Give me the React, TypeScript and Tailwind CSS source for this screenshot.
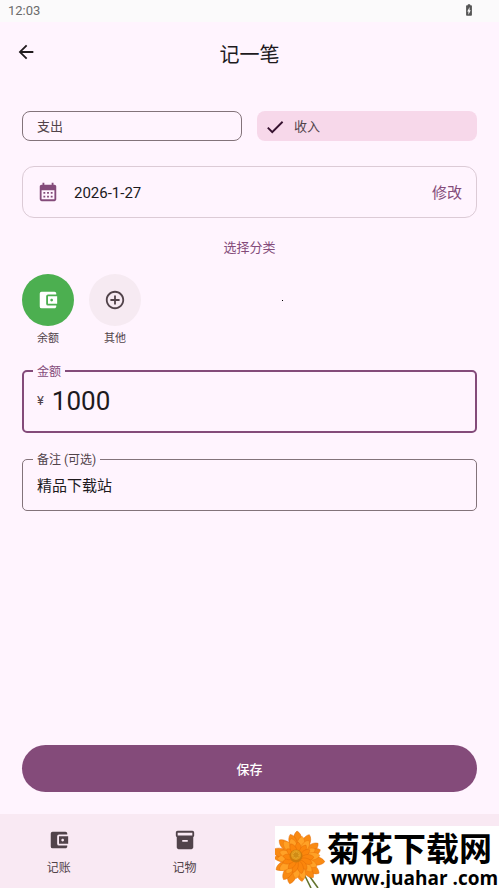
import { useState } from "react";
import type { ReactNode } from "react";
import {
  MdAccountBalanceWallet,
  MdAddCircleOutline,
  MdArrowBack,
  MdBatteryChargingFull,
  MdCalendarMonth,
  MdCheck,
  MdInventory2,
} from "react-icons/md";

function StatusBar() {
  return (
    <div className="flex h-[22px] items-center justify-between bg-[#fbfafb] pr-[23px] pl-2 text-[13px] text-[#6b6b6b]">
      <span>12:03</span>
      <MdBatteryChargingFull className="mb-0.5 size-3.5 text-[#555555]" />
    </div>
  );
}

function TypeChip({ label, selected, onSelect }: { label: string; selected: boolean; onSelect: () => void }) {
  return (
    <button
      type="button"
      aria-pressed={selected}
      onClick={onSelect}
      className={
        selected
          ? "flex h-[30px] items-center gap-2 rounded-lg bg-[#f7d8ea] pt-px pl-[7px] text-[13px] text-[#51434a]"
          : "flex h-[30px] items-center rounded-lg border border-[#83737a] pt-px pl-3.5 text-[13px] text-[#51434a]"
      }
    >
      {selected && <MdCheck className="size-[22px] text-[#36112f]" />}
      {label}
    </button>
  );
}

function Category({ label, tone, children }: { label: string; tone: string; children: ReactNode }) {
  return (
    <button type="button" className="flex w-[52px] flex-col items-center gap-1 text-[11px] leading-[18px] text-[#51434a]">
      <span className={`flex size-[52px] items-center justify-center rounded-full ${tone}`}>{children}</span>
      {label}
    </button>
  );
}

function NavItem({ label, children }: { label: string; children: ReactNode }) {
  return (
    <a href="#" className="flex flex-col items-center gap-2 pt-[15px] text-xs leading-[18px] text-[#51434a]">
      {children}
      {label}
    </a>
  );
}

const outerPetals = Array.from({ length: 15 }, (_, i) => ({ angle: i * 24 + (i % 3) * 4, reach: 1 - (i % 4) * 0.04 }));
const middlePetals = Array.from({ length: 14 }, (_, i) => ({ angle: i * 25.7 + 11 - (i % 2) * 5, reach: 1 - (i % 3) * 0.06 }));
const innerPetals = Array.from({ length: 13 }, (_, i) => ({ angle: i * 27.7 + (i % 2) * 4, reach: 1 - (i % 3) * 0.05 }));

function Flower() {
  return (
    <svg viewBox="0 0 52 62" className="h-[62px] w-[52px] shrink-0" aria-hidden="true">
      <path d="M29 48 36 62M33 48 43 62" stroke="#65752f" strokeWidth="1.6" fill="none" />
      <g transform="translate(23 32)">
        {outerPetals.map(({ angle, reach }) => (
          <path key={angle} d="M0-5C-6-13-6-23-1-27 5-24 6-13 0-5Z" fill="#f98a12" stroke="#e06a08" strokeWidth=".5" transform={`rotate(${angle}) scale(${reach})`} />
        ))}
        {middlePetals.map(({ angle, reach }) => (
          <path key={angle} d="M0-4C-5-11-5-19 0-22 5-19 5-11 0-4Z" fill="#ffa126" stroke="#ec780c" strokeWidth=".5" transform={`rotate(${angle}) scale(${reach})`} />
        ))}
        {innerPetals.map(({ angle, reach }) => (
          <path key={angle} d="M0-2C-4-7-4-13 0-16 4-13 4-7 0-2Z" fill="#fb860c" stroke="#dd6606" strokeWidth=".4" transform={`rotate(${angle}) scale(${reach})`} />
        ))}
        <circle cx="-2" cy="-2" r="6.5" fill="#cf7a0a" />
        <circle cx="-2" cy="-3" r="5" fill="#e39a1c" />
        <circle cx="-2" cy="-3" r="3" fill="#d08c16" strokeDasharray="1 1" stroke="#efb53a" />
      </g>
    </svg>
  );
}

export default function App() {
  const [kind, setKind] = useState("income");
  return (
    <div className="relative flex min-h-screen flex-col bg-[#fff4fe] font-[Roboto,'Noto_Sans_CJK_SC',sans-serif] text-[#201a1d]">
      <StatusBar />
      <header className="grid h-16 grid-cols-[1fr_auto_1fr] items-center px-[15px]">
        <button type="button" aria-label="返回" className="mb-1 w-fit">
          <MdArrowBack className="size-[22px]" />
        </button>
        <h1 className="pt-0.5 text-xl">记一笔</h1>
      </header>

      <main className="flex flex-1 flex-col px-[22px] pt-[25px]">
        <div className="grid grid-cols-2 gap-[15px]">
          <TypeChip label="支出" selected={kind === "expense"} onSelect={() => setKind("expense")} />
          <TypeChip label="收入" selected={kind === "income"} onSelect={() => setKind("income")} />
        </div>

        <div className="mt-[25px] flex h-[52px] items-center rounded-xl border border-[#dccbd6] px-3.5 text-[15px]">
          <MdCalendarMonth className="size-[22px] text-[#844b7a]" />
          <span className="ml-[15px] flex-1 pt-0.5">2026-1-27</span>
          <button type="button" className="pt-0.5 text-[#844b7a]">修改</button>
        </div>

        <h2 className="mt-5 text-center text-[13px] leading-5 text-[#844b7a]">选择分类</h2>

        <div className="mt-4 flex gap-[15px]">
          <Category label="余额" tone="bg-[#4caf50] text-white">
            <MdAccountBalanceWallet className="size-[22px]" />
          </Category>
          <Category label="其他" tone="bg-[#f6eaf2] text-[#51434a]">
            <MdAddCircleOutline className="size-[22px]" />
          </Category>
        </div>

        <fieldset className="mt-3.5 h-[71px] rounded-[5px] border-2 border-[#844b7a] px-[13px]">
          <legend className="-ml-1 px-1 pt-0.5 text-xs text-[#844b7a]">
            <label htmlFor="amount">金额</label>
          </legend>
          <div className="flex h-[42px] items-center gap-2">
            <span className="text-[13px] text-[#51434a]">¥</span>
            <input id="amount" defaultValue="1000" inputMode="decimal" className="min-w-0 flex-1 bg-transparent text-[26px] leading-8 outline-none" />
          </div>
        </fieldset>

        <fieldset className="mt-[17px] h-[61px] rounded-[5px] border border-[#83737a] px-3.5">
          <legend className="-ml-1 px-1 pt-0.5 text-xs text-[#51434a]">
            <label htmlFor="note">备注 (可选)</label>
          </legend>
          <input id="note" defaultValue="精品下载站" className="block h-8 w-full bg-transparent text-[15px] outline-none" />
        </fieldset>

        <button type="button" className="mt-auto mb-[22px] h-[47px] rounded-full bg-[#844b7a] pt-0.5 text-[13px] font-medium text-white">
          保存
        </button>
      </main>

      <nav className="h-[74px] bg-[#f9e9f3]">
        <div className="-ml-1 grid grid-cols-4">
          <NavItem label="记账">
            <MdAccountBalanceWallet className="size-[22px]" />
          </NavItem>
          <NavItem label="记物">
            <MdInventory2 className="size-[22px]" />
          </NavItem>
        </div>
      </nav>

      <span className="absolute top-[300px] left-[282px] size-px bg-black" />

      <aside className="absolute right-0 bottom-0 flex h-[62px] w-[224px] bg-white text-black">
        <Flower />
        <div className="flex flex-col whitespace-nowrap">
          <strong className="font-['Noto_Sans_CJK_SC',sans-serif] text-[33px] leading-[42px] font-bold">菊花下载网</strong>
          <span className="pl-1 font-['Open_Sans',sans-serif] text-[19px] leading-5 font-bold">www.juahar .com</span>
        </div>
      </aside>
    </div>
  );
}
